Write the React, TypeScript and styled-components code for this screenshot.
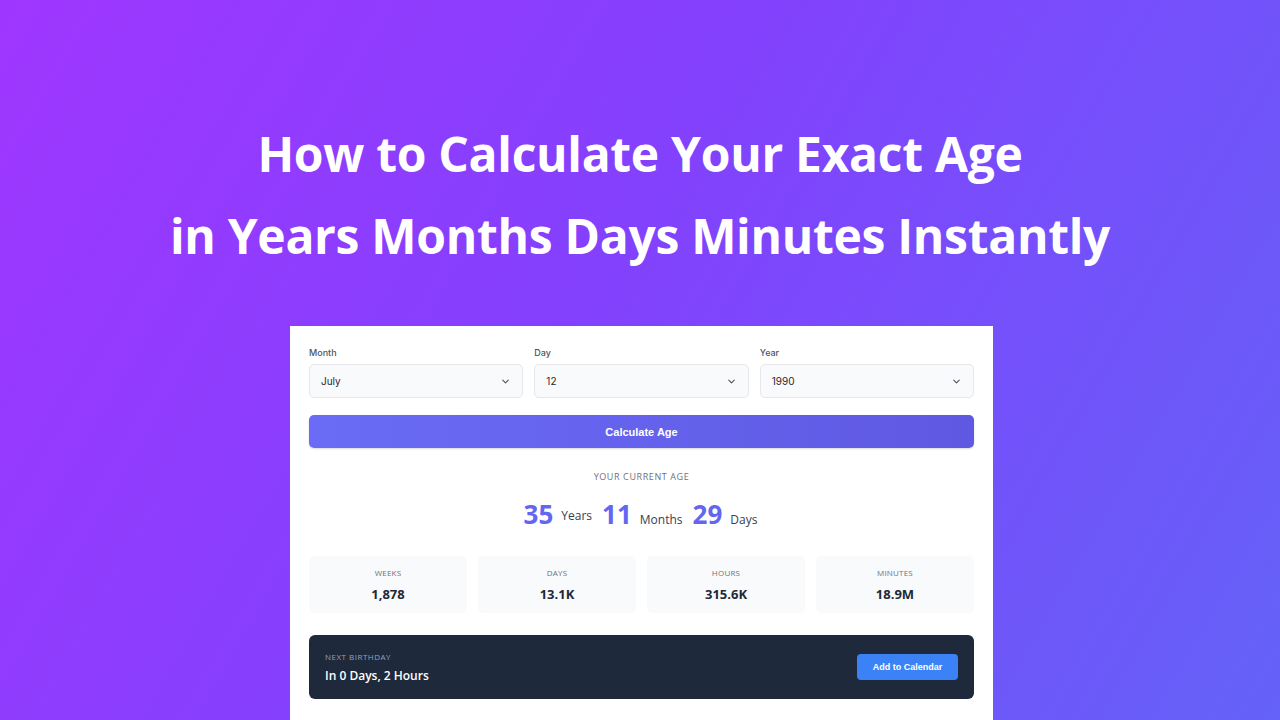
import React from "react";
import styled, { createGlobalStyle } from "styled-components";

const GlobalStyle = createGlobalStyle`
  html, body {
    margin: 0;
    padding: 0;
    width: 1280px;
    height: 720px;
    overflow: hidden;
  }
  body {
    font-family: "Open Sans", "Noto Sans", sans-serif;
  }
`;

const Page = styled.div`
  width: 1280px;
  height: 720px;
  background: linear-gradient(120deg, #9f36ff 0%, #8341fd 45%, #6462f8 100%);
  display: flex;
  flex-direction: column;
  align-items: center;
  overflow: hidden;
`;

const Title = styled.h1`
  margin: 113px 0 0;
  color: #ffffff;
  font-family: "Open Sans", "Noto Sans", sans-serif;
  font-weight: 700;
  font-size: 48px;
  line-height: 82px;
  text-align: center;
  letter-spacing: -0.3px;
`;

const Card = styled.div`
  margin: 49px 0 0 3px;
  width: 703px;
  flex: 1;
  background: #ffffff;
  box-sizing: border-box;
  padding: 21px 19px 20px;
  display: flex;
  flex-direction: column;
`;

const SelectRow = styled.div`
  display: grid;
  grid-template-columns: repeat(3, 1fr);
  gap: 11px;
`;

const Field = styled.div`
  display: flex;
  flex-direction: column;
  gap: 6px;
`;

const Label = styled.span`
  font-family: Inter, "Noto Sans", sans-serif;
  font-size: 9px;
  color: #4b5563;
  font-weight: 500;
`;

const SelectBox = styled.div`
  height: 34px;
  box-sizing: border-box;
  border: 1px solid #e5e7eb;
  border-radius: 5px;
  background: #f9fafb;
  display: flex;
  align-items: center;
  justify-content: space-between;
  padding: 0 11px 0 11px;
  font-family: Inter, "Noto Sans", sans-serif;
  font-size: 10px;
  color: #1f2937;
`;

const Chevron = () => (
  <svg width="11" height="11" viewBox="0 0 24 24" fill="none" stroke="#4b5563" strokeWidth="2.4" strokeLinecap="round" strokeLinejoin="round">
    <path d="M6 9l6 6 6-6" />
  </svg>
);

const CalcButton = styled.button`
  margin-top: 17px;
  height: 33px;
  border: none;
  border-radius: 5px;
  background: linear-gradient(90deg, #6a6cf6 0%, #5f58e3 100%);
  color: #ffffff;
  font-family: "Liberation Sans", Arial, sans-serif;
  font-weight: 700;
  font-size: 11px;
  box-shadow: 0 1px 2px rgba(0, 0, 0, 0.15);
`;

const AgeCaption = styled.div`
  margin-top: 22px;
  text-align: center;
  font-family: "Open Sans", sans-serif;
  font-size: 9px;
  letter-spacing: 0.6px;
  color: #6b7280;
`;

const AgeLine = styled.div`
  margin-top: 14px;
  display: flex;
  justify-content: center;
  align-items: baseline;
  gap: 8px;
  font-family: "Open Sans", sans-serif;
`;

const AgeNumber = styled.span`
  font-size: 26px;
  font-weight: 700;
  color: #6366f1;
  line-height: 34px;
`;

const AgeUnit = styled.span<{ $raise?: number }>`
  font-size: 12px;
  color: #374151;
  position: relative;
  top: ${(p) => -(p.$raise ?? 0)}px;
  margin-right: 2px;
`;

const StatsGrid = styled.div`
  margin-top: 25px;
  display: grid;
  grid-template-columns: repeat(4, 1fr);
  gap: 11px;
`;

const StatBox = styled.div`
  height: 57px;
  border-radius: 5px;
  background: #f9fafb;
  display: flex;
  flex-direction: column;
  align-items: center;
  justify-content: center;
  gap: 7px;
`;

const StatLabel = styled.span`
  font-family: "Open Sans", sans-serif;
  font-size: 8px;
  color: #6b7280;
  letter-spacing: 0.2px;
`;

const StatValue = styled.span`
  font-family: "Open Sans", sans-serif;
  font-size: 13px;
  font-weight: 700;
  color: #1f2937;
`;

const Birthday = styled.div`
  margin-top: 22px;
  height: 64px;
  box-sizing: border-box;
  border-radius: 6px;
  background: #1e293b;
  display: flex;
  align-items: center;
  justify-content: space-between;
  padding: 0 16px;
`;

const BirthdayText = styled.div`
  display: flex;
  flex-direction: column;
  gap: 5px;
`;

const BirthdayLabel = styled.span`
  font-family: "Open Sans", sans-serif;
  font-size: 8px;
  letter-spacing: 0.5px;
  color: #94a3b8;
`;

const BirthdayValue = styled.span`
  font-family: "Open Sans", sans-serif;
  font-size: 12px;
  font-weight: 600;
  color: #ffffff;
`;

const CalendarButton = styled.button`
  width: 101px;
  height: 26px;
  border: none;
  border-radius: 4px;
  background: #3b82f6;
  color: #ffffff;
  font-family: "Liberation Sans", Arial, sans-serif;
  font-weight: 700;
  font-size: 9px;
`;

const selects = [
  { label: "Month", value: "July" },
  { label: "Day", value: "12" },
  { label: "Year", value: "1990" },
];

const stats = [
  { label: "WEEKS", value: "1,878" },
  { label: "DAYS", value: "13.1K" },
  { label: "HOURS", value: "315.6K" },
  { label: "MINUTES", value: "18.9M" },
];

export default function App() {
  return (
    <>
      <GlobalStyle />
      <Page>
        <Title>
          How to Calculate Your Exact Age
          <br />
          in Years Months Days Minutes Instantly
        </Title>
        <Card>
          <SelectRow>
            {selects.map((s) => (
              <Field key={s.label}>
                <Label>{s.label}</Label>
                <SelectBox>
                  {s.value}
                  <Chevron />
                </SelectBox>
              </Field>
            ))}
          </SelectRow>
          <CalcButton>Calculate Age</CalcButton>
          <AgeCaption>YOUR CURRENT AGE</AgeCaption>
          <AgeLine>
            <AgeNumber>35</AgeNumber>
            <AgeUnit $raise={4}>Years</AgeUnit>
            <AgeNumber>11</AgeNumber>
            <AgeUnit>Months</AgeUnit>
            <AgeNumber>29</AgeNumber>
            <AgeUnit>Days</AgeUnit>
          </AgeLine>
          <StatsGrid>
            {stats.map((s) => (
              <StatBox key={s.label}>
                <StatLabel>{s.label}</StatLabel>
                <StatValue>{s.value}</StatValue>
              </StatBox>
            ))}
          </StatsGrid>
          <Birthday>
            <BirthdayText>
              <BirthdayLabel>NEXT BIRTHDAY</BirthdayLabel>
              <BirthdayValue>In 0 Days, 2 Hours</BirthdayValue>
            </BirthdayText>
            <CalendarButton>Add to Calendar</CalendarButton>
          </Birthday>
        </Card>
      </Page>
    </>
  );
}
